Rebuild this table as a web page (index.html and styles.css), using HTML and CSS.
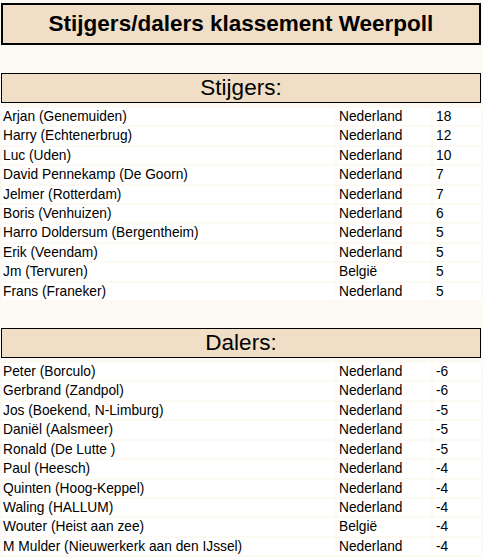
FILE: index.html
```html
<!DOCTYPE html>
<html>
<head>
<meta charset="utf-8">
<link rel="stylesheet" href="styles.css">
</head>
<body>
<div class="title">Stijgers/dalers klassement Weerpoll</div>

<div class="section-head">Stijgers:</div>
<table class="ranking">
  <colgroup><col class="c-name"><col class="c-country"><col class="c-score"></colgroup>
  <tr><td>Arjan (Genemuiden)</td><td>Nederland</td><td>18</td></tr>
  <tr><td>Harry (Echtenerbrug)</td><td>Nederland</td><td>12</td></tr>
  <tr><td>Luc (Uden)</td><td>Nederland</td><td>10</td></tr>
  <tr><td>David Pennekamp (De Goorn)</td><td>Nederland</td><td>7</td></tr>
  <tr><td>Jelmer (Rotterdam)</td><td>Nederland</td><td>7</td></tr>
  <tr><td>Boris (Venhuizen)</td><td>Nederland</td><td>6</td></tr>
  <tr><td>Harro Doldersum (Bergentheim)</td><td>Nederland</td><td>5</td></tr>
  <tr><td>Erik (Veendam)</td><td>Nederland</td><td>5</td></tr>
  <tr><td>Jm (Tervuren)</td><td>België</td><td>5</td></tr>
  <tr><td>Frans (Franeker)</td><td>Nederland</td><td>5</td></tr>
</table>

<div class="section-head">Dalers:</div>
<table class="ranking">
  <colgroup><col class="c-name"><col class="c-country"><col class="c-score"></colgroup>
  <tr><td>Peter (Borculo)</td><td>Nederland</td><td>-6</td></tr>
  <tr><td>Gerbrand (Zandpol)</td><td>Nederland</td><td>-6</td></tr>
  <tr><td>Jos (Boekend, N-Limburg)</td><td>Nederland</td><td>-5</td></tr>
  <tr><td>Daniël (Aalsmeer)</td><td>Nederland</td><td>-5</td></tr>
  <tr><td>Ronald (De Lutte )</td><td>Nederland</td><td>-5</td></tr>
  <tr><td>Paul (Heesch)</td><td>Nederland</td><td>-4</td></tr>
  <tr><td>Quinten (Hoog-Keppel)</td><td>Nederland</td><td>-4</td></tr>
  <tr><td>Waling (HALLUM)</td><td>Nederland</td><td>-4</td></tr>
  <tr><td>Wouter (Heist aan zee)</td><td>België</td><td>-4</td></tr>
  <tr><td>M Mulder (Nieuwerkerk aan den IJssel)</td><td>Nederland</td><td>-4</td></tr>
</table>
</body>
</html>
```
FILE: styles.css
```css
html, body {
  margin: 0;
  padding: 0;
  background: #fdfaf4;
}
body {
  font-family: "Liberation Sans", Arial, sans-serif;
  color: #000;
  padding-top: 3px;
}
.title {
  margin: 0 2px 0 1px;
  height: 38px;
  line-height: 38px;
  border: 2px solid #000;
  background: #f0dec6;
  text-align: center;
  font-weight: bold;
  font-size: 22.5px;
}
.section-head {
  margin: 28px 2px 0 1px;
  height: 28px;
  line-height: 28px;
  border: 1px solid #000;
  background: #f0dec6;
  text-align: center;
  font-size: 22.5px;
}
.ranking + .section-head {
  margin-top: 26px;
}
.ranking {
  width: 100%;
  margin-top: 3px;
  table-layout: fixed;
  border-collapse: separate;
  border-spacing: 2px;
  font-size: 13.75px;
}
.c-name { width: 333px; }
.c-country { width: 94px; }
.c-score { width: auto; }
.ranking td {
  background: #fff;
  padding: 1px;
  height: 15.4px;
  line-height: 15.4px;
  white-space: nowrap;
}
.ranking td:nth-child(2) {
  padding-left: 2px;
}
.ranking td:last-child {
  padding-left: 3px;
}
```
